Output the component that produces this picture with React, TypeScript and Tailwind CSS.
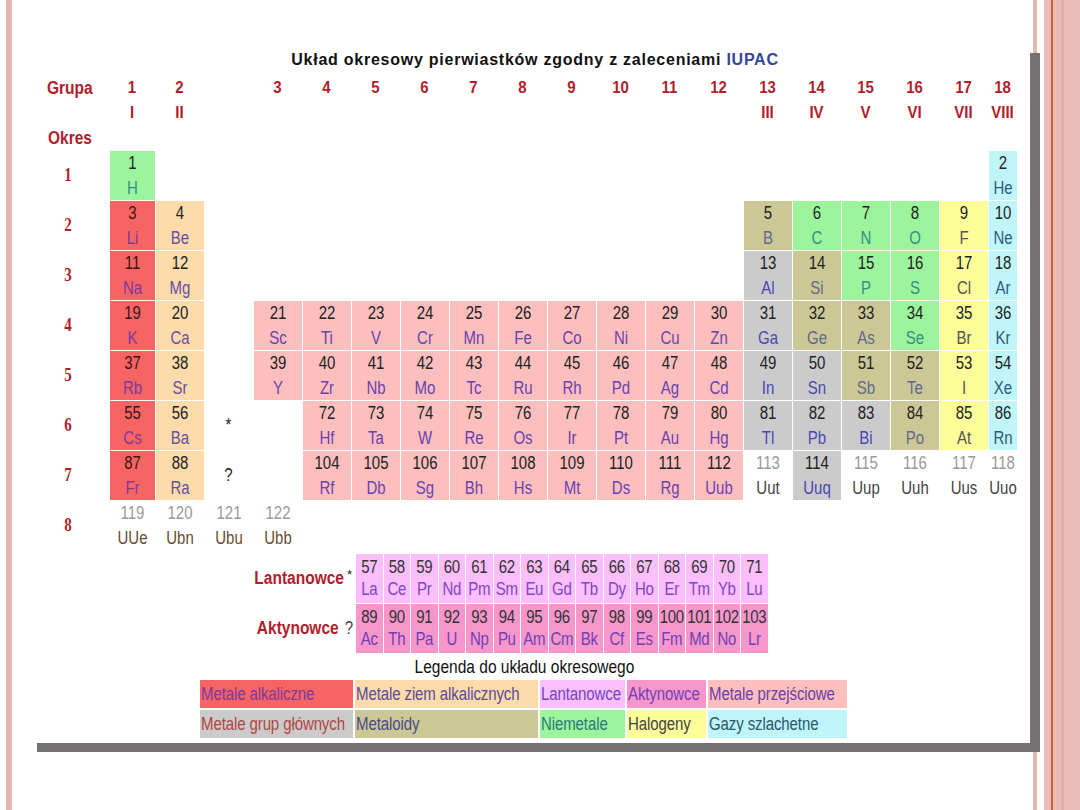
import React from "react";

type Cat = "A" | "AE" | "T" | "P" | "M" | "N" | "H" | "G" | "U" | "X" | "Q";
type El = { n: string; s: string; c: Cat };
type Entry = El | string | null;

const STY: Record<Cat, { bg: string; num: string; sym: string }> = {
  A: { bg: "bg-[#f86464]", num: "text-[#3a1414]", sym: "text-[#7c3a9c]" },
  AE: { bg: "bg-[#fddbab]", num: "text-[#222]", sym: "text-[#6650a2]" },
  T: { bg: "bg-[#fdbebe]", num: "text-[#222]", sym: "text-[#6a42b0]" },
  P: { bg: "bg-[#cbcbcb]", num: "text-[#222]", sym: "text-[#4848b4]" },
  M: { bg: "bg-[#cbc895]", num: "text-[#222]", sym: "text-[#62688e]" },
  N: { bg: "bg-[#9cf59c]", num: "text-[#222]", sym: "text-[#2f8f86]" },
  H: { bg: "bg-[#fdfd9a]", num: "text-[#222]", sym: "text-[#555]" },
  G: { bg: "bg-[#c0f5fa]", num: "text-[#222]", sym: "text-[#2f5b7c]" },
  U: { bg: "bg-white", num: "text-[#999]", sym: "text-[#444]" },
  X: { bg: "bg-white", num: "text-[#9a9a9a]", sym: "text-[#6a4a32]" },
  Q: { bg: "bg-white", num: "text-[#222]", sym: "text-[#222]" },
};

const e = (n: string | number, s: string, c: Cat): El => ({ n: String(n), s, c });
const _ = null;
const E10 = [_, _, _, _, _, _, _, _, _, _];

const ROWS: Entry[][] = [
  [e(1, "H", "N"), _, _, ...E10, _, _, _, _, _, e(2, "He", "G")],
  [e(3, "Li", "A"), e(4, "Be", "AE"), _, ...E10, e(5, "B", "M"), e(6, "C", "N"), e(7, "N", "N"), e(8, "O", "N"), e(9, "F", "H"), e(10, "Ne", "G")],
  [e(11, "Na", "A"), e(12, "Mg", "AE"), _, ...E10, e(13, "Al", "P"), e(14, "Si", "M"), e(15, "P", "N"), e(16, "S", "N"), e(17, "Cl", "H"), e(18, "Ar", "G")],
  [
    e(19, "K", "A"), e(20, "Ca", "AE"), _,
    e(21, "Sc", "T"), e(22, "Ti", "T"), e(23, "V", "T"), e(24, "Cr", "T"), e(25, "Mn", "T"), e(26, "Fe", "T"), e(27, "Co", "T"), e(28, "Ni", "T"), e(29, "Cu", "T"), e(30, "Zn", "T"),
    e(31, "Ga", "P"), e(32, "Ge", "M"), e(33, "As", "M"), e(34, "Se", "N"), e(35, "Br", "H"), e(36, "Kr", "G"),
  ],
  [
    e(37, "Rb", "A"), e(38, "Sr", "AE"), _,
    e(39, "Y", "T"), e(40, "Zr", "T"), e(41, "Nb", "T"), e(42, "Mo", "T"), e(43, "Tc", "T"), e(44, "Ru", "T"), e(45, "Rh", "T"), e(46, "Pd", "T"), e(47, "Ag", "T"), e(48, "Cd", "T"),
    e(49, "In", "P"), e(50, "Sn", "P"), e(51, "Sb", "M"), e(52, "Te", "M"), e(53, "I", "H"), e(54, "Xe", "G"),
  ],
  [
    e(55, "Cs", "A"), e(56, "Ba", "AE"), "*", _,
    e(72, "Hf", "T"), e(73, "Ta", "T"), e(74, "W", "T"), e(75, "Re", "T"), e(76, "Os", "T"), e(77, "Ir", "T"), e(78, "Pt", "T"), e(79, "Au", "T"), e(80, "Hg", "T"),
    e(81, "Tl", "P"), e(82, "Pb", "P"), e(83, "Bi", "P"), e(84, "Po", "M"), e(85, "At", "H"), e(86, "Rn", "G"),
  ],
  [
    e(87, "Fr", "A"), e(88, "Ra", "AE"), "?", _,
    e(104, "Rf", "T"), e(105, "Db", "T"), e(106, "Sg", "T"), e(107, "Bh", "T"), e(108, "Hs", "T"), e(109, "Mt", "T"), e(110, "Ds", "T"), e(111, "Rg", "T"), e(112, "Uub", "T"),
    e(113, "Uut", "U"), e(114, "Uuq", "P"), e(115, "Uup", "U"), e(116, "Uuh", "U"), e(117, "Uus", "U"), e(118, "Uuo", "U"),
  ],
  [e(119, "UUe", "X"), e(120, "Ubn", "X"), e(121, "Ubu", "X"), e(122, "Ubb", "X"), ...E10, _, _, _, _, _],
];

const LANT = [
  ["57", "La"], ["58", "Ce"], ["59", "Pr"], ["60", "Nd"], ["61", "Pm"], ["62", "Sm"], ["63", "Eu"], ["64", "Gd"],
  ["65", "Tb"], ["66", "Dy"], ["67", "Ho"], ["68", "Er"], ["69", "Tm"], ["70", "Yb"], ["71", "Lu"],
];
const AKT = [
  ["89", "Ac"], ["90", "Th"], ["91", "Pa"], ["92", "U"], ["93", "Np"], ["94", "Pu"], ["95", "Am"], ["96", "Cm"],
  ["97", "Bk"], ["98", "Cf"], ["99", "Es"], ["100", "Fm"], ["101", "Md"], ["102", "No"], ["103", "Lr"],
];

const GROUPS = ["1", "2", "", "3", "4", "5", "6", "7", "8", "9", "10", "11", "12", "13", "14", "15", "16", "17", "18"];
const ROMAN = ["I", "II", "", "", "", "", "", "", "", "", "", "", "", "III", "IV", "V", "VI", "VII", "VIII"];

const RED = "text-[#b21d2c]";

function Tall({ children }: { children: React.ReactNode }) {
  return <span className="inline-block scale-y-[1.2]">{children}</span>;
}

function Cell({ v }: { v: Entry }) {
  if (v === null) return <div />;
  if (typeof v === "string")
    return (
      <div className="flex items-center justify-center text-[15px] text-[#222]">
        <Tall>{v}</Tall>
      </div>
    );
  const s = STY[v.c];
  return (
    <div className={`${s.bg} border-l border-t border-white flex flex-col items-center text-[15px]`}>
      <span className={`h-[24px] leading-[24px] ${s.num}`}>
        <Tall>{v.n}</Tall>
      </span>
      <span className={`h-[25px] leading-[25px] ${s.sym}`}>
        <Tall>{v.s}</Tall>
      </span>
    </div>
  );
}

function HeadCell({ t }: { t: string }) {
  return (
    <div className={`flex items-center justify-center text-[15px] font-bold ${RED}`}>
      <span className="inline-block scale-y-[1.15]">{t}</span>
    </div>
  );
}

function Series({ data, bg, sym }: { data: string[][]; bg: string; sym: string }) {
  return (
    <div className="grid grid-cols-[repeat(15,27.5px)] h-[50px]">
      {data.map(([n, s]) => (
        <div key={n} className={`${bg} border-l border-t border-white flex flex-col items-center text-[15px] tracking-[-0.3px]`}>
          <span className="h-[24px] leading-[26px] text-[#333]">
            <Tall>{n}</Tall>
          </span>
          <span className={`h-[25px] leading-[22px] ${sym}`}>
            <Tall>{s}</Tall>
          </span>
        </div>
      ))}
    </div>
  );
}

const LEGEND: [string, string, string][][] = [
  [
    ["Metale alkaliczne", "bg-[#f86464]", "text-[#7a3a9e]"],
    ["Metale ziem alkalicznych", "bg-[#fddbab]", "text-[#5c4a9c]"],
    ["Lantanowce", "bg-[#fdbefd]", "text-[#6e46c6]"],
    ["Aktynowce", "bg-[#f796cb]", "text-[#7040b6]"],
    ["Metale przejściowe", "bg-[#fdbebe]", "text-[#6a40a8]"],
  ],
  [
    ["Metale grup głównych", "bg-[#cbcbcb]", "text-[#b04646]"],
    ["Metaloidy", "bg-[#cbc895]", "text-[#4a4a8a]"],
    ["Niemetale", "bg-[#9cf59c]", "text-[#2a7a78]"],
    ["Halogeny", "bg-[#fdfd9a]", "text-[#444]"],
    ["Gazy szlachetne", "bg-[#c0f5fa]", "text-[#2a5870]"],
  ],
];

export default function App() {
  return (
    <div className="w-[1080px] h-[810px] bg-white flex overflow-hidden font-['Liberation_Sans',Arial,sans-serif]">
      <div className="w-[6px] shrink-0" />
      <div className="w-[6px] shrink-0 bg-[#e4b6b1]" />
      <div className="w-[1021px] shrink-0 pt-[44px] pl-[15px]">
        <div className="relative z-10 w-[1003px] h-[699px] bg-white shadow-[10px_9px_0_0_#737171] flex flex-col">
          {/* title */}
          <div className="h-[31px] flex items-center justify-center pl-[13px] text-[16px] font-bold tracking-[0.75px] text-[#111]">
            <span>
              Układ okresowy pierwiastków zgodny z zaleceniami <span className="text-[#34469a]">IUPAC</span>
            </span>
          </div>

          {/* main table */}
          <div className="grid grid-cols-[82px_46px_49px_49px_repeat(15,49px)_29px] grid-rows-[25px_25px_25px_repeat(8,50px)]">
            <div className={`flex items-center pl-[20px] text-[15.5px] font-bold ${RED}`}>
              <span className="inline-block scale-y-[1.15]">Grupa</span>
            </div>
            {GROUPS.map((g, i) => (
              <HeadCell key={"g" + i} t={g} />
            ))}
            <div />
            {ROMAN.map((g, i) => (
              <HeadCell key={"r" + i} t={g} />
            ))}
            <div className={`flex items-center pl-[21px] text-[15.5px] font-bold ${RED}`}>
              <span className="inline-block scale-y-[1.15]">Okres</span>
            </div>
            {GROUPS.map((_g, i) => (
              <div key={"o" + i} />
            ))}
            {ROWS.map((row, ri) => (
              <React.Fragment key={"row" + ri}>
                <div className={`flex items-center justify-center font-['Liberation_Serif',serif] font-bold text-[15px] ${RED}`}>
                  <Tall>{ri + 1}</Tall>
                </div>
                {row.map((v, ci) => (
                  <Cell key={ri + "-" + ci} v={v} />
                ))}
              </React.Fragment>
            ))}
          </div>

          {/* lanthanides / actinides */}
          <div className="mt-[3px] flex">
            <div className="w-[328px] flex flex-col">
              <div className="h-[50px] flex items-center justify-end pr-[3px]">
                <span className={`text-[15.5px] font-bold ${RED} inline-block scale-y-[1.15]`}>Lantanowce</span>
                <span className="ml-[3px] mb-[6px] text-[13px] text-[#222]">*</span>
              </div>
              <div className="h-[50px] flex items-center justify-end pr-[2px]">
                <span className={`text-[15.5px] font-bold ${RED} inline-block scale-y-[1.15]`}>Aktynowce</span>
                <span className="ml-[6px] text-[15px] text-[#444]">
                  <Tall>?</Tall>
                </span>
              </div>
            </div>
            <div className="flex flex-col">
              <Series data={LANT} bg="bg-[#fdbefd]" sym="text-[#7a48c2]" />
              <Series data={AKT} bg="bg-[#f796cb]" sym="text-[#7040b6]" />
            </div>
          </div>

          {/* legend */}
          <div className="ml-[173px] w-[649px] flex flex-col">
            <div className="h-[27px] flex items-center justify-center text-[15.5px] text-[#111]">
              <Tall>Legenda do układu okresowego</Tall>
            </div>
            <div className="flex flex-col gap-[2px]">
              {LEGEND.map((row, ri) => (
                <div key={"lg" + ri} className="grid grid-cols-[155px_185px_87px_81px_141px] h-[28px]">
                  {row.map(([t, bg, fg]) => (
                    <div key={t} className={`${bg} ${fg} border-r-2 border-white flex items-center pl-[1px] text-[15px] tracking-[-0.1px] whitespace-nowrap`}>
                      <Tall>{t}</Tall>
                    </div>
                  ))}
                </div>
              ))}
            </div>
          </div>
        </div>
      </div>
      <div className="w-[4px] shrink-0 bg-[#e6b8b2]" />
      <div className="w-[7px] shrink-0" />
      <div className="flex-1 bg-[#e8bcb7] flex">
        <div className="w-[7px]" />
        <div className="w-[2px] bg-[#d8573f]" />
        <div className="w-[8px]" />
        <div className="w-[3px] bg-[#e2aea8]" />
      </div>
    </div>
  );
}
